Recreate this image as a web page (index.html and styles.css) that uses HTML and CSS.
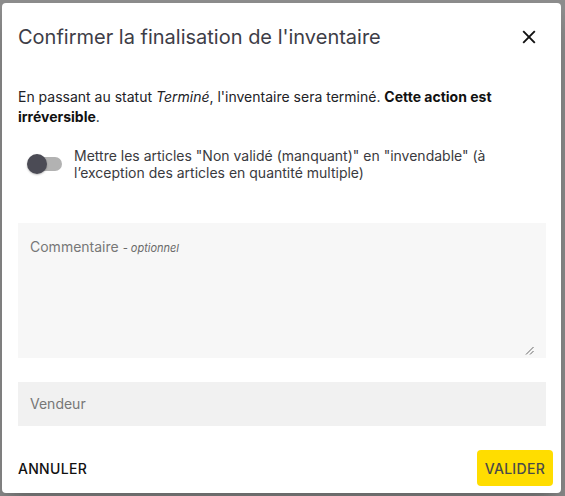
FILE: index.html
```html
<!DOCTYPE html>
<html lang="fr">
<head>
  <meta charset="UTF-8">
  <meta name="viewport" content="width=device-width, initial-scale=1.0">
  <title>Confirmer la finalisation de l'inventaire</title>
  <link rel="stylesheet" href="styles.css">
</head>
<body>
  <div class="backdrop">
    <div class="dialog" role="dialog">
      <div class="dialog-header">
        <h2 class="dialog-title">Confirmer la finalisation de l'inventaire</h2>
        <button class="close-btn" aria-label="Fermer">
          <svg width="24" height="24" viewBox="0 0 24 24"><path d="M6.2 6.2L17.8 17.8M17.8 6.2L6.2 17.8"/></svg>
        </button>
      </div>

      <div class="dialog-content">
        <p class="intro">En passant au statut <em>Terminé</em>, l'inventaire sera terminé. <strong>Cette action est irréversible</strong>.</p>

        <label class="switch-row">
          <span class="switch">
            <span class="switch-track"></span>
            <span class="switch-thumb"></span>
          </span>
          <span class="switch-label">Mettre les articles "Non validé (manquant)" en "invendable" (à l’exception des articles en quantité multiple)</span>
        </label>

        <div class="comment-field">
          <span class="field-label">Commentaire <em class="optional">- optionnel</em></span>
          <svg class="resize-grip" width="9" height="9" viewBox="0 0 9 9"><path d="M8.5 1L1 8.5M8.5 5L5 8.5" stroke="#555" stroke-width="0.9" fill="none"/></svg>
        </div>

        <div class="text-field">
          <span class="field-label">Vendeur</span>
        </div>
      </div>

      <div class="dialog-actions">
        <button class="btn btn-text">Annuler</button>
        <button class="btn btn-primary">Valider</button>
      </div>
    </div>
  </div>
</body>
</html>
```

FILE: styles.css
```css
* {
  box-sizing: border-box;
  margin: 0;
  padding: 0;
}

:root {
  --backdrop: #8e8e8e;
  --text: #222226;
  --title: #3d3d47;
  --muted: #777777;
  --field-bg: #f7f7f7;
  --input-bg: #f1f1f1;
  --yellow: #ffdd00;
  --font-sans: Inter, "Noto Sans", Arial, sans-serif;
}

body {
  font-family: var(--font-sans);
  color: var(--text);
  background-color: var(--backdrop);
  width: 565px;
  height: 496px;
  overflow: hidden;
}

.backdrop {
  padding: 3px 0 0 2px;
}

/* Dialog */
.dialog {
  width: 559px;
  height: 490px;
  background-color: #fff;
  border-radius: 4px;
  box-shadow: 0 11px 15px -7px rgba(0,0,0,0.2), 0 24px 38px 3px rgba(0,0,0,0.14);
  display: flex;
  flex-direction: column;
}

.dialog-header {
  display: flex;
  align-items: center;
  justify-content: space-between;
  padding: 18px 20px 0 16px;
}

.dialog-title {
  font-size: 20px;
  font-weight: 400;
  line-height: 32px;
  color: var(--title);
}

.close-btn {
  border: none;
  background: none;
  width: 24px;
  height: 24px;
  display: flex;
  cursor: pointer;
}

.close-btn svg {
  fill: none;
  stroke: #111;
  stroke-width: 1.9;
}

.dialog-content {
  padding: 34px 15px 0 16px;
  flex: 1;
}

.intro {
  font-size: 14px;
  line-height: 20px;
  color: var(--text);
}

.intro strong {
  font-weight: 700;
  color: #111;
}

/* Switch */
.switch-row {
  display: flex;
  align-items: center;
  gap: 12px;
  margin-top: 20px;
  cursor: pointer;
}

.switch {
  position: relative;
  width: 35px;
  height: 20px;
  margin-left: 9px;
  flex-shrink: 0;
}

.switch-track {
  display: block;
  margin: 3px 0 0 1px;
  width: 34px;
  height: 14px;
  border-radius: 7px;
  background-color: #b2b2b2;
}

.switch-thumb {
  position: absolute;
  left: 0;
  top: 0;
  width: 20px;
  height: 20px;
  border-radius: 50%;
  background-color: #4b4b55;
  box-shadow: 0 1px 2px rgba(0,0,0,0.25);
}

.switch-label {
  font-size: 14px;
  line-height: 17px;
  color: #3a3a3e;
}

/* Fields */
.comment-field {
  position: relative;
  margin-top: 42px;
  height: 135px;
  padding: 13px 12px;
  background-color: var(--field-bg);
}

.field-label {
  font-size: 14px;
  line-height: 18px;
  color: var(--muted);
}

.optional {
  font-size: 11px;
  color: #6a6a6a;
}

.resize-grip {
  position: absolute;
  right: 12px;
  bottom: 3px;
}

.text-field {
  margin-top: 24px;
  height: 44px;
  padding: 0 12px;
  display: flex;
  align-items: center;
  background-color: var(--input-bg);
}

/* Actions */
.dialog-actions {
  display: flex;
  justify-content: space-between;
  align-items: center;
  padding: 0 8px 7px 8px;
}

.btn {
  font-family: var(--font-sans);
  font-size: 14px;
  font-weight: 500;
  text-transform: uppercase;
  letter-spacing: 0.3px;
  border: none;
  border-radius: 4px;
  height: 36px;
  padding: 0 8px;
  cursor: pointer;
  background: none;
}

.btn-text {
  color: #111;
  padding: 0 8px;
}

.btn-primary {
  background-color: var(--yellow);
  color: #4a4a4a;
}
```
